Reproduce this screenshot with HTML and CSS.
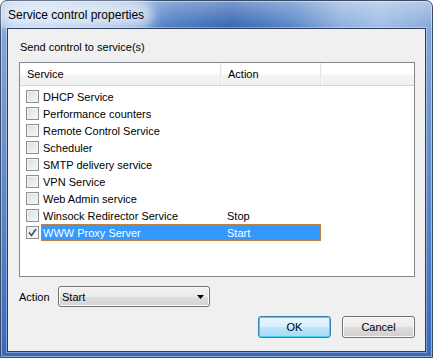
FILE: index.html
```html
<!DOCTYPE html>
<html lang="en">
<head>
  <meta charset="UTF-8">
  <title>Service control properties</title>
  <link rel="stylesheet" href="styles.css">
</head>
<body>
  <div class="window">
    <div class="titlebar"><span class="title">Service control properties</span></div>

    <div class="client">
      <div class="caption">Send control to service(s)</div>

      <!-- service list -->
      <div class="listview">
        <div class="lv-header">
          <div class="col col-service">Service</div>
          <div class="col col-action">Action</div>
          <div class="col col-rest"></div>
        </div>
        <div class="lv-body">
          <div class="row"><span class="check"></span><span class="name">DHCP Service</span><span class="act"></span></div>
          <div class="row"><span class="check"></span><span class="name">Performance counters</span><span class="act"></span></div>
          <div class="row"><span class="check"></span><span class="name">Remote Control Service</span><span class="act"></span></div>
          <div class="row"><span class="check"></span><span class="name">Scheduler</span><span class="act"></span></div>
          <div class="row"><span class="check"></span><span class="name">SMTP delivery service</span><span class="act"></span></div>
          <div class="row"><span class="check"></span><span class="name">VPN Service</span><span class="act"></span></div>
          <div class="row"><span class="check"></span><span class="name">Web Admin service</span><span class="act"></span></div>
          <div class="row"><span class="check"></span><span class="name">Winsock Redirector Service</span><span class="act">Stop</span></div>
          <div class="row selected">
            <span class="check checked">
              <svg width="9" height="9" viewBox="0 0 9 9"><path d="M1 4.5 L3.5 7.5 L8 1" fill="none" stroke="#3b4f8c" stroke-width="1.6"/></svg>
            </span>
            <span class="sel"><span class="name">WWW Proxy Server</span><span class="act">Start</span></span>
          </div>
        </div>
      </div>

      <!-- action chooser -->
      <div class="action-row">
        <span class="label">Action</span>
        <div class="combo">
          <span>Start</span>
          <svg class="arrow" width="7" height="4" viewBox="0 0 7 4"><path d="M0 0 H7 L3.5 4 Z" fill="#000"/></svg>
        </div>
      </div>

      <div class="buttons">
        <button class="btn default">OK</button>
        <button class="btn">Cancel</button>
      </div>
    </div>
  </div>
</body>
</html>
```

FILE: styles.css
```css
html, body {
  margin: 0;
  padding: 0;
  background: #fff;
}
body {
  font-family: "Liberation Sans", Arial, sans-serif;
  font-size: 11px;
  color: #000;
}
.window {
  width: 433px;
  height: 358px;
  box-sizing: border-box;
  padding: 0 6px 5px 6px;
  border: 1px solid #3a4a66;
  border-radius: 7px 7px 0 0;
  background:
    linear-gradient(to bottom, rgba(255,255,255,0.35) 0, rgba(255,255,255,0) 27px) top / 100% 27px no-repeat,
    linear-gradient(to right, #9fbde4 0, #aac6ea 40px, #8fb0dd 110px, #4c7cc2 170px, #3464b2 230px, #5684c6 290px, #8eafdc 340px, #9ebde4 380px, #86a8d9 433px) top / 100% 27px no-repeat,
    linear-gradient(to bottom, #8aabdc 0, #6f95d0 120px, #4f7fc6 250px, #3868ba 358px);
  box-shadow: inset 0 0 0 1px rgba(255,255,255,0.45);
  display: flex;
  flex-direction: column;
}
.titlebar {
  height: 27px;
  display: flex;
  align-items: center;
}
.title {
  font-family: "Liberation Sans", Arial, sans-serif;
  font-size: 12px;
  color: #000;
  background: rgba(255,255,255,0.55);
  box-shadow: 0 0 10px 7px rgba(255,255,255,0.55);
  border-radius: 8px;
  padding: 0 2px 0 1px;
  margin-top: 1px;
}
.client {
  flex: 1;
  background: #f0f0f0;
  border: 1px solid #2e3d5e;
  box-shadow: 0 0 0 1px rgba(255,255,255,0.35);
  display: flex;
  flex-direction: column;
}
.caption {
  padding: 12px 0 0 12px;
  height: 21px;
}
.listview {
  margin: 0 10px 0 11px;
  height: 215px;
  box-sizing: border-box;
  border: 1px solid #828790;
  background: #fff;
}
.lv-header {
  display: flex;
  height: 23px;
  box-sizing: border-box;
  background: linear-gradient(to bottom, #ffffff 0, #ffffff 50%, #f3f4f5 55%, #eef0f2 100%);
  border-bottom: 1px solid #d5d5d5;
}
.col {
  box-sizing: border-box;
  padding-left: 7px;
  line-height: 22px;
  border-right: 1px solid #e3e5e7;
  box-shadow: 1px 0 0 #fbfbfb;
}
.col-service { width: 201px; }
.col-action { width: 100px; }
.col-rest { flex: 1; border-right: none; box-shadow: none; }
.lv-body {
  padding-top: 2px;
}
.row {
  display: flex;
  align-items: center;
  height: 17px;
}
.check {
  width: 13px;
  height: 13px;
  box-sizing: border-box;
  margin: 0 2px 0 6px;
  border: 1px solid #8e8f8f;
  background: linear-gradient(135deg, #dcdcdc 0, #f0f0f0 70%, #fafafa 100%);
  box-shadow: inset 0 0 0 1px #f4f4f4;
  display: flex;
  align-items: center;
  justify-content: center;
}
.check.checked {
  background: linear-gradient(135deg, #e4e4e4 0, #f4f4f4 70%, #fff 100%);
}
.name {
  width: 184px;
  padding-left: 2px;
  white-space: nowrap;
}
.sel {
  display: flex;
  align-items: center;
  height: 17px;
  width: 280px;
  box-sizing: border-box;
  background: #3399ff;
  color: #fff;
  border: 1px dotted #c7873e;
}
.sel .name {
  width: 184px;
  padding-left: 1px;
}
.action-row {
  display: flex;
  align-items: center;
  margin: 9px 0 0 11px;
  height: 21px;
}
.label {
  width: 39px;
}
.combo {
  width: 152px;
  height: 21px;
  box-sizing: border-box;
  border: 1px solid #707070;
  border-radius: 3px;
  background: linear-gradient(to bottom, #f2f2f2 0, #ebebeb 50%, #dddddd 51%, #d3d3d3 100%);
  box-shadow: inset 0 0 0 1px #fcfcfc;
  display: flex;
  align-items: center;
  justify-content: space-between;
  padding: 0 5px 0 3px;
}
.buttons {
  display: flex;
  justify-content: flex-end;
  gap: 11px;
  margin: 9px 10px 0 0;
}
.btn {
  width: 73px;
  height: 22px;
  box-sizing: border-box;
  font-family: "Liberation Sans", Arial, sans-serif;
  font-size: 11px;
  color: #000;
  border: 1px solid #707070;
  border-radius: 3px;
  background: linear-gradient(to bottom, #f2f2f2 0, #ebebeb 50%, #dddddd 51%, #cfcfcf 100%);
  box-shadow: inset 0 0 0 1px #fcfcfc;
  padding: 0;
}
.btn.default {
  border-color: #3c7fb1;
  background: linear-gradient(to bottom, #eaf6fd 0, #d9f0fc 50%, #bee6fd 51%, #a7d9f5 100%);
  box-shadow: inset 0 0 0 1px #48d0f8;
}
```
